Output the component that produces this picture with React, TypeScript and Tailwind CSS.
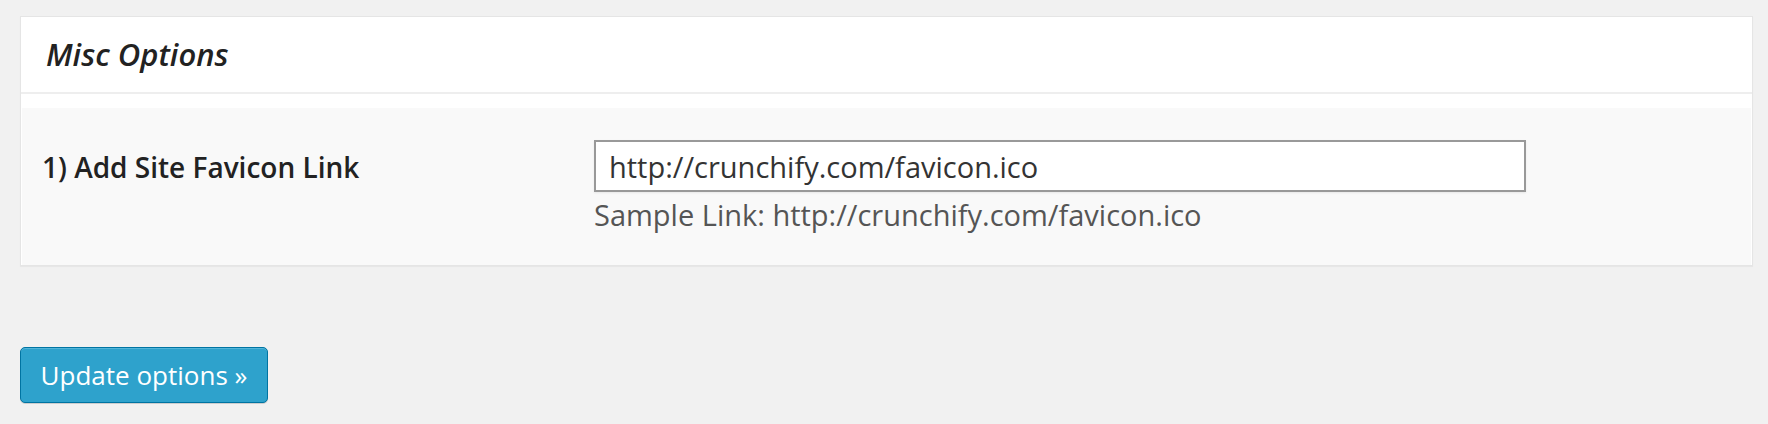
import * as React from "react"

/**
 * Options page for the favicon setting: a single panel with one row,
 * then the blue submit button underneath.
 */
const font = { fontFamily: '"Open Sans", "Noto Sans", sans-serif' }

type OptionRowProps = {
  label: string
  value: string
  hint: string
}

function OptionRow({ label, value, hint }: OptionRowProps) {
  return (
    <div className="flex items-start bg-[#f9f9f9] pt-8 pb-[32px] pl-[20px]">
      <div className="w-[552px] shrink-0 pt-[9px] text-[28px] font-semibold leading-[36px] text-[#222]">
        {label}
      </div>
      <div className="flex flex-col">
        <input
          readOnly
          value={value}
          className="h-[52px] w-[932px] border-2 border-[#999] bg-white px-[13px] text-[29px] text-[#333] shadow-[0_1px_2px_rgba(0,0,0,0.07)] outline-none"
          style={font}
        />
        <p className="mt-[5px] text-[29px] leading-[36px] text-[#555]">{hint}</p>
      </div>
    </div>
  )
}

export default function App() {
  return (
    <div className="min-h-[424px] bg-[#f1f1f1] pt-4 pl-5 pr-[15px]" style={font}>
      <div className="border border-[#e5e5e5] bg-white shadow-[0_1px_1px_rgba(0,0,0,0.04)]">
        <div className="flex h-[77px] items-center border-b-2 border-[#eee] pl-[25px]">
          <h3 className="text-[31px] font-semibold italic text-[#222]">Misc Options</h3>
        </div>
        <div className="px-px pt-[14px]">
          <OptionRow
            label="1) Add Site Favicon Link"
            value="http://crunchify.com/favicon.ico"
            hint="Sample Link: http://crunchify.com/favicon.ico"
          />
        </div>
      </div>

      <div className="pt-[81px]">
        <button className="h-[56px] w-[248px] rounded-[5px] border border-[#0074a2] bg-[#2ea2cc] text-[26px] text-white shadow-[inset_0_1px_0_rgba(120,200,230,0.5),0_1px_0_rgba(0,0,0,0.15)]">
          Update options »
        </button>
      </div>
    </div>
  )
}
